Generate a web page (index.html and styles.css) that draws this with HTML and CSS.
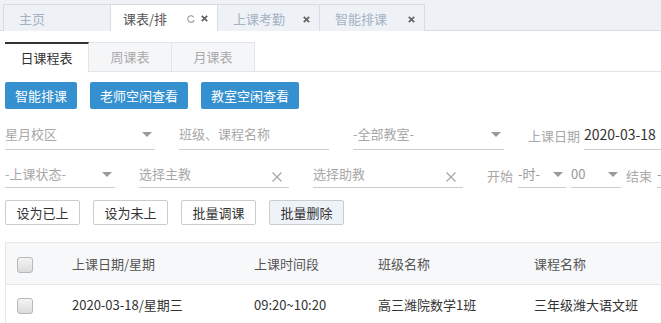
FILE: index.html
```html
<!DOCTYPE html>
<html lang="zh">
<head>
    <meta charset="UTF-8">
    <title>课表/排课</title>
    <link rel="stylesheet" href="styles.css">
</head>
<body>
    <div class="tabbar">
        <div class="tab">主页</div>
        <div class="tab active">课表/排
            <span class="tab-icons">
                <svg class="ico-refresh" viewBox="0 0 10 10"><path d="M7.8 3.2 A3.3 3.3 0 1 0 8.1 6.2" fill="none" stroke="#999" stroke-width="1.1"/></svg>
                <svg class="ico-close" viewBox="0 0 10 10"><path d="M2 2 L8 8 M8 2 L2 8" stroke="#666" stroke-width="2"/></svg>
            </span>
        </div>
        <div class="tab">上课考勤
            <svg class="ico-close" viewBox="0 0 10 10"><path d="M2 2 L8 8 M8 2 L2 8" stroke="#666" stroke-width="2"/></svg>
        </div>
        <div class="tab">智能排课
            <svg class="ico-close" viewBox="0 0 10 10"><path d="M2 2 L8 8 M8 2 L2 8" stroke="#666" stroke-width="2"/></svg>
        </div>
    </div>

    <div class="container">
        <div class="subtabs">
            <div class="subtab active">日课程表</div>
            <div class="subtab">周课表</div>
            <div class="subtab">月课表</div>
        </div>

        <div class="btn-row">
            <button class="btn-blue">智能排课</button>
            <button class="btn-blue">老师空闲查看</button>
            <button class="btn-blue">教室空闲查看</button>
        </div>

        <div class="filter-row">
            <div class="field w150">星月校区<span class="caret"></span></div>
            <div class="field w150">班级、课程名称</div>
            <div class="field w151">-全部教室-<span class="caret"></span></div>
            <div class="label">上课日期</div>
            <div class="field value wide">2020-03-18</div>
        </div>

        <div class="filter-row row2">
            <div class="field w110">-上课状态-<span class="caret"></span></div>
            <div class="field w150">选择主教
                <svg class="ico-clear" viewBox="0 0 12 12"><path d="M1.5 1.5 L10.5 10.5 M10.5 1.5 L1.5 10.5" stroke="#aaa" stroke-width="1.4"/></svg>
            </div>
            <div class="field w150">选择助教
                <svg class="ico-clear" viewBox="0 0 12 12"><path d="M1.5 1.5 L10.5 10.5 M10.5 1.5 L1.5 10.5" stroke="#aaa" stroke-width="1.4"/></svg>
            </div>
            <div class="label">开始</div>
            <div class="field w48 dark">-时-<span class="caret"></span></div>
            <div class="field w50 dark">00<span class="caret"></span></div>
            <div class="label">结束</div>
            <div class="field w48 dark">-时-</div>
        </div>

        <div class="btn-row small">
            <button class="btn-white">设为已上</button>
            <button class="btn-white">设为未上</button>
            <button class="btn-white">批量调课</button>
            <button class="btn-white pressed">批量删除</button>
        </div>

        <table class="grid">
            <thead>
                <tr>
                    <th class="col-check"><span class="checkbox"></span></th>
                    <th class="col-date">上课日期/星期</th>
                    <th class="col-time">上课时间段</th>
                    <th class="col-class">班级名称</th>
                    <th class="col-course">课程名称</th>
                    <th></th>
                </tr>
            </thead>
            <tbody>
                <tr>
                    <td class="col-check"><span class="checkbox"></span></td>
                    <td>2020-03-18/星期三</td>
                    <td>09:20~10:20</td>
                    <td>高三潍院数学1班</td>
                    <td>三年级潍大语文班</td>
                    <td></td>
                </tr>
            </tbody>
        </table>
    </div>
</body>
</html>
```

FILE: styles.css
```css
body {
    margin: 0;
    padding: 0;
    font-family: "Noto Sans CJK SC", "Noto Sans", sans-serif;
    font-size: 13px;
    color: #333;
    background: #fff;
    overflow: hidden;
    width: 661px;
}

/* top tab bar */
.tabbar {
    display: flex;
    height: 26px;
    padding: 4px 0 0 3px;
    background: #eef1f6;
    border-bottom: 1px solid #d8dce5;
}

.tab {
    position: relative;
    display: flex;
    align-items: center;
    box-sizing: border-box;
    height: 27px;
    padding-left: 15px;
    width: 105px;
    border: 1px solid #d8dce5;
    border-bottom: none;
    border-left: none;
    color: #a5b2c4;
    font-size: 13px;
    background: #eef1f6;
}

.tab:first-child {
    width: 108px;
    border-left: 1px solid #d8dce5;
}

.tab:nth-child(3) {
    width: 102px;
}

.tab.active {
    width: 107px;
    background: #fff;
    color: #555;
    padding-left: 12px;
}

.tab-icons {
    position: absolute;
    right: 8px;
    top: 9px;
    display: flex;
    gap: 4px;
}

.ico-refresh {
    width: 10px;
    height: 10px;
}

.ico-close {
    width: 9px;
    height: 9px;
}

.tab > .ico-close {
    position: absolute;
    right: 8px;
    top: 10px;
}

.container {
    padding-left: 5px;
}

/* sub tabs */
.subtabs {
    display: flex;
    margin-top: 11px;
    border-bottom: 1px solid #e2e4e8;
}

.subtab {
    box-sizing: border-box;
    width: 83px;
    height: 29px;
    line-height: 27px;
    text-align: center;
    color: #aaa;
    background: #f5f6f8;
    border: 1px solid #e2e4e8;
    border-left: none;
    border-bottom: none;
    margin-bottom: -1px;
}

.subtab.active {
    width: 84px;
    color: #333;
    background: #fff;
    border-top: 2px solid #333;
    border-left: none;
    height: 30px;
}

/* buttons */
.btn-row {
    display: flex;
    gap: 13px;
    margin-top: 10px;
}

.btn-row.small {
    gap: 13px;
    margin-top: 12px;
}

button {
    font-family: inherit;
    font-size: 13px;
    margin: 0;
    cursor: pointer;
}

.btn-blue {
    height: 27px;
    padding: 0 10px;
    border: none;
    border-radius: 2px;
    background: #3590cf;
    color: #fff;
}

.btn-white {
    height: 25px;
    width: 75px;
    padding: 0;
    border: 1px solid #ccc;
    border-radius: 2px;
    background: #fff;
    color: #333;
}

.btn-white.pressed {
    background: #eef3f9;
}

/* filters */
.filter-row {
    display: flex;
    align-items: center;
    gap: 24px;
    margin-top: 11px;
    height: 30px;
    white-space: nowrap;
}

.filter-row.row2 {
    margin-top: 13px;
    height: 25px;
}

.field {
    position: relative;
    box-sizing: border-box;
    height: 30px;
    line-height: 28px;
    border-bottom: 1px solid #ccc;
    color: #a8a8a8;
    flex: none;
}

.row2 .field {
    height: 25px;
    line-height: 22px;
}

.w150 { width: 150px; }
.w151 { width: 151px; }
.w110 { width: 110px; }
.w48 { width: 48px; }
.w50 { width: 50px; }

.field.value {
    color: #333;
    font-size: 14px;
    width: 200px;
}

.field.dark {
    color: #999;
}

.label {
    color: #a8a8a8;
    margin-right: -20px;
}

.row2 .label {
    margin-right: -19px;
}

.row2 .field.w48,
.row2 .field.w50 {
    margin-right: -19px;
}

.caret {
    position: absolute;
    right: 3px;
    top: 12px;
    width: 0;
    height: 0;
    border-left: 5px solid transparent;
    border-right: 5px solid transparent;
    border-top: 5px solid #999;
}

.row2 .caret {
    top: 9px;
}

.ico-clear {
    position: absolute;
    right: 6px;
    top: 8px;
    width: 12px;
    height: 12px;
}

/* table */
.grid {
    width: 900px;
    margin-top: 17px;
    border-collapse: collapse;
    border-left: 1px solid #e6e6e6;
    border-top: 1px solid #e6e6e6;
    table-layout: fixed;
}

.grid th,
.grid td {
    text-align: left;
    font-weight: normal;
    padding: 0 0 0 13px;
    border-bottom: 1px solid #e6e6e6;
    white-space: nowrap;
}

.grid th {
    height: 41px;
    background: #f7f8fa;
    color: #555;
}

.grid td {
    height: 38px;
    color: #333;
}

.grid .col-check { width: 42px; padding-left: 11px; }
.grid .col-date { width: 169px; }
.grid .col-time { width: 111px; }
.grid .col-class { width: 143px; }
.grid .col-course { width: 150px; }

.checkbox {
    display: inline-block;
    vertical-align: middle;
    width: 14px;
    height: 14px;
    border: 1px solid #b8b8b8;
    border-radius: 3px;
    background: linear-gradient(#f4f4f4, #dcdcdc);
}
```
